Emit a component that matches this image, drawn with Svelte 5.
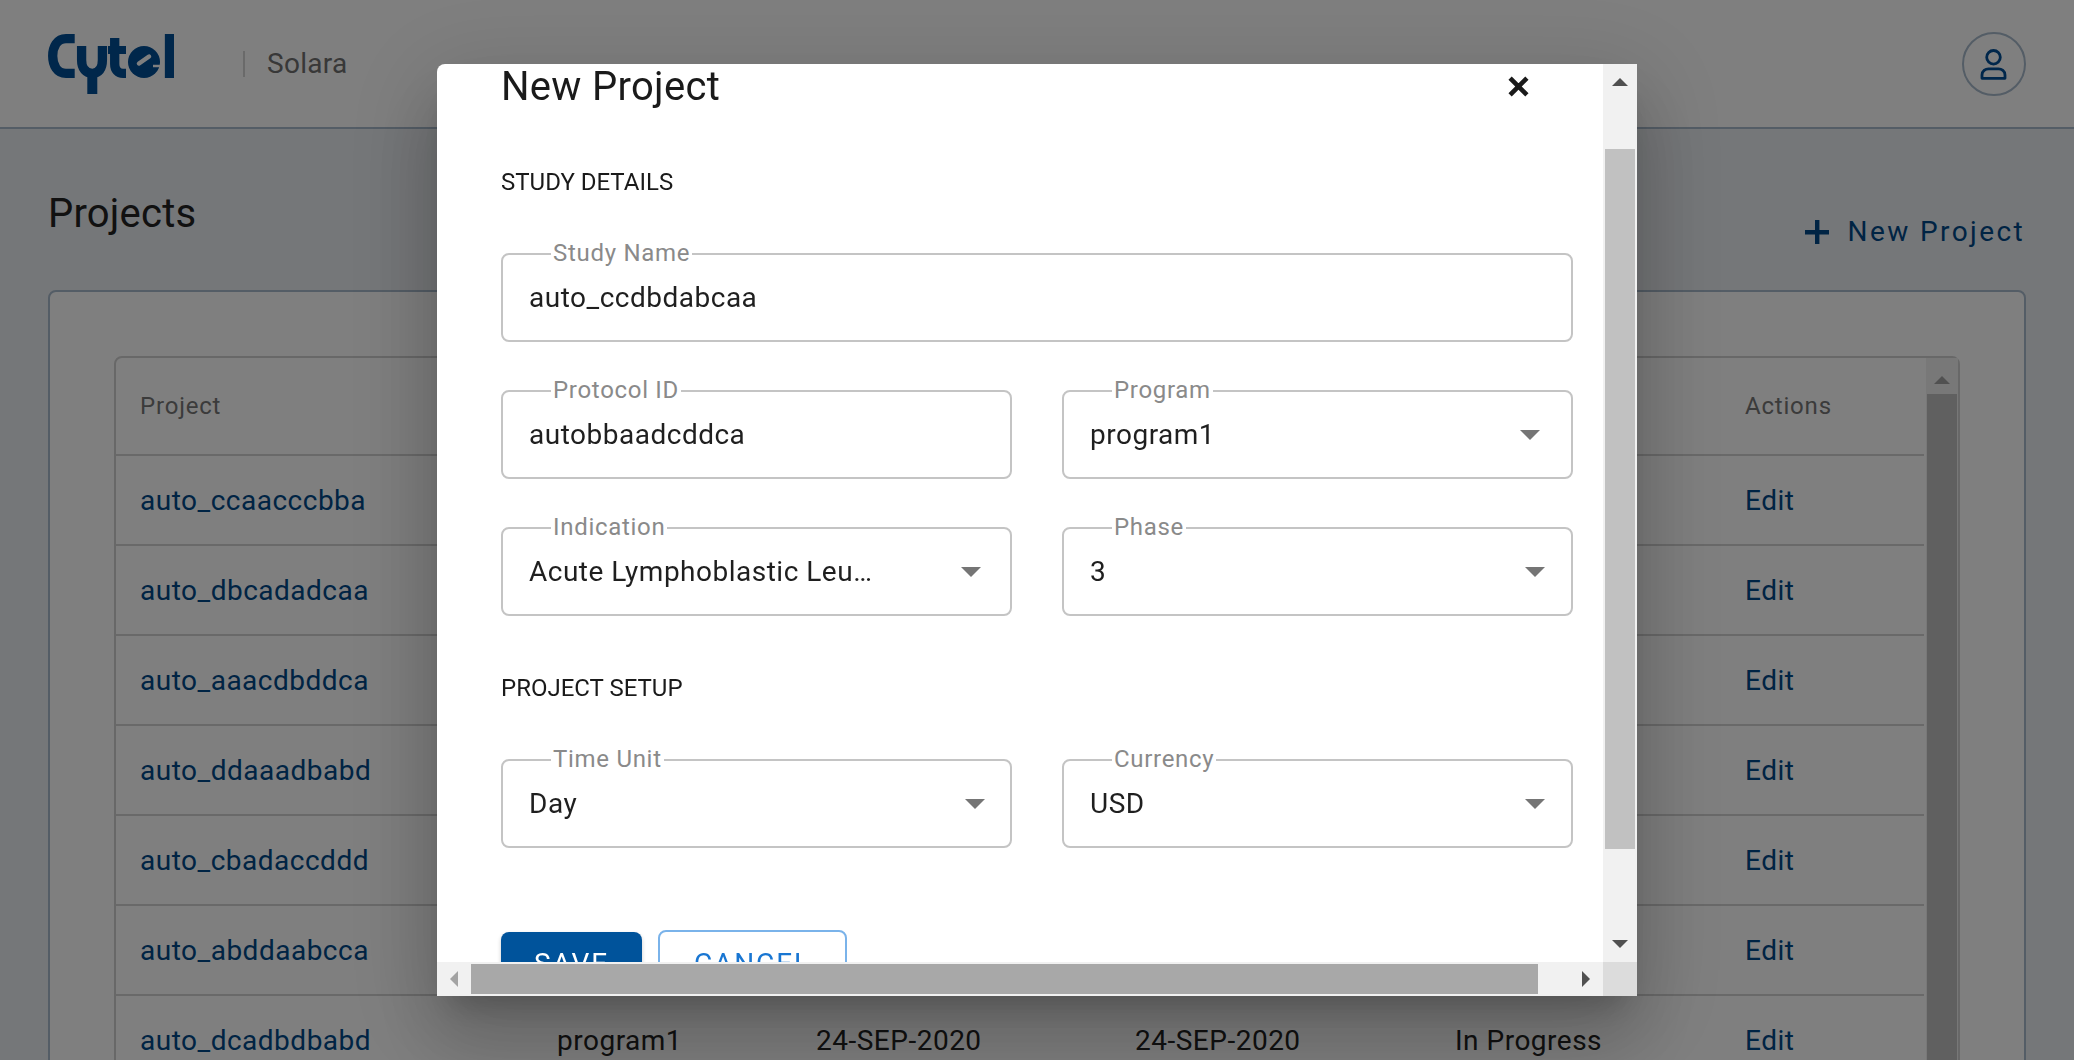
<script>
  const rows = [
    "auto_ccaacccbba",
    "auto_dbcadadcaa",
    "auto_aaacdbddca",
    "auto_ddaaadbabd",
    "auto_cbadaccddd",
    "auto_abddaabcca",
    "auto_dcadbdbabd"
  ];

  const studyRows = [
    [
      { label: "Protocol ID", value: "autobbaadcddca" },
      { label: "Program", value: "program1", arrow: 33 }
    ],
    [
      { label: "Indication", value: "Acute Lymphoblastic Leukemia", arrow: 31 },
      { label: "Phase", value: "3", arrow: 28 }
    ]
  ];

  const setupRow = [
    { label: "Time Unit", value: "Day", arrow: 27 },
    { label: "Currency", value: "USD", arrow: 28 }
  ];
</script>

{#snippet field(f)}
  <div class="field">
    <span class="legend">{f.label}</span>
    <span class="value">{f.value}</span>
    {#if f.arrow}
      <i class="caret" style="margin-right: {f.arrow - 2}px"></i>
    {/if}
  </div>
{/snippet}

<header class="topbar">
  <svg class="logo" viewBox="48 34 126 60" width="126" height="60" aria-label="Cytel">
    <g fill="none" stroke="#004e96" stroke-width="9.3">
      <path d="M74.700 38.700H66C57 38.700 52.700 47 52.700 56S57 73.300 66 73.300H74.700" />
      <path d="M81.600 46V60C81.600 69 86 73.300 92.300 73.300S102.400 69 102.400 60V46" />
      <path d="M92.300 70V94" stroke-width="10" />
      <path d="M114.700 38V64C114.700 70 118 73.400 123 73.400H126" />
      <path d="M108 50H126" stroke-width="8" />
      <path d="M169.500 34V78" />
    </g>
    <circle cx="144" cy="62" r="16" fill="#004e96" />
    <path d="M139 63.500L149 56.500" stroke="#fff" stroke-width="4.500" stroke-linecap="round" />
    <path d="M153 66H161" stroke="#fff" stroke-width="2.500" />
  </svg>
  <span class="divider"></span>
  <span class="product">Solara</span>
  <button class="avatar" aria-label="Account">
    <svg width="32" height="32" viewBox="0 0 32 32" fill="none" stroke="#004e96" stroke-width="2.8">
      <circle cx="15.500" cy="9.300" r="6.800" />
      <path d="M4 30.300V27C4 23 7.500 20.800 10.500 20.800H20.500C23.500 20.800 27 23 27 27V30.300Z" stroke-linejoin="round" />
    </svg>
  </button>
</header>

<main class="page">
  <div class="page-head">
    <h1>Projects</h1>
    <button class="new-project">
      <svg width="24" height="24" viewBox="0 0 24 24" fill="#004888"><path d="M10 0h4.400v10H24v4.400h-9.600V24H10v-9.600H0V10h10z" /></svg>
      New Project
    </button>
  </div>

  <section class="card">
    <div class="table-wrap">
      <table>
        <thead>
          <tr>
            <th class="c1">Project</th>
            <th class="c2">Program</th>
            <th class="c3">Start Date</th>
            <th class="c4">End Date</th>
            <th class="c5">Status</th>
            <th class="c6">Actions</th>
          </tr>
        </thead>
        <tbody>
          {#each rows as name}
            <tr>
              <td><a href="#top">{name}</a></td>
              <td>program1</td>
              <td>24-SEP-2020</td>
              <td>24-SEP-2020</td>
              <td>In Progress</td>
              <td><a href="#top">Edit</a></td>
            </tr>
          {/each}
        </tbody>
      </table>
      <div class="table-scroll">
        <i class="arrow up"></i>
        <div class="table-thumb"></div>
      </div>
    </div>
  </section>
</main>

<div class="backdrop">
  <div class="dialog" role="dialog" aria-modal="true">
    <div class="viewport">
      <div class="dialog-title">
        <h2>New Project</h2>
        <svg class="close" width="21" height="21" viewBox="0 0 20 20" stroke="#1a1a1a" stroke-width="4.4"><path d="M2 2l16 16M18 2L2 18" /></svg>
      </div>

      <h3>STUDY DETAILS</h3>
      <div class="row full">
        {@render field({ label: "Study Name", value: "auto_ccdbdabcaa" })}
      </div>
      {#each studyRows as row}
        <div class="row">
          {#each row as f}
            {@render field(f)}
          {/each}
        </div>
      {/each}

      <h3>PROJECT SETUP</h3>
      <div class="row">
        {#each setupRow as f}
          {@render field(f)}
        {/each}
      </div>

      <div class="actions">
        <button class="save">SAVE</button>
        <button class="cancel">CANCEL</button>
      </div>
    </div>

    <div class="vscroll">
      <i class="arrow up dark"></i>
      <div class="vthumb"></div>
      <i class="arrow down dark"></i>
    </div>
    <div class="hscroll">
      <i class="arrow left"></i>
      <div class="hthumb"></div>
      <i class="arrow right"></i>
    </div>
    <div class="corner"></div>
  </div>
</div>

<style>
  :global(html),
  :global(body) {
    height: 100%;
    overflow: hidden;
  }

  :global(body) {
    background: #ebeef2;
    font-family: Roboto, "Liberation Sans", sans-serif;
    color: #222;
  }

  button {
    font-family: inherit;
    cursor: pointer;
  }

  .topbar {
    display: flex;
    align-items: center;
    height: 127px;
    padding: 0 48px;
    background: #fff;
    border-bottom: 2px solid #a8bacc;
  }

  .divider {
    width: 2px;
    height: 26px;
    margin: 0 22px 0 69px;
    background: #d4d4d4;
  }

  .product {
    font-size: 28px;
    line-height: 32px;
    letter-spacing: 0.3px;
    color: #707070;
  }

  .avatar {
    display: flex;
    align-items: center;
    justify-content: center;
    width: 64px;
    height: 64px;
    margin-left: auto;
    padding: 0;
    background: none;
    border: 2px solid #a8bacc;
    border-radius: 50%;
  }

  .page {
    box-sizing: border-box;
    height: 931px;
    overflow: hidden;
    padding: 62px 48px 0;
  }

  .page-head {
    display: flex;
    justify-content: space-between;
    align-items: flex-start;
    height: 58px;
  }

  h1 {
    margin: 0;
    font-size: 40px;
    font-weight: 400;
    line-height: 46px;
    letter-spacing: 0.2px;
    color: #222;
  }

  .new-project {
    display: flex;
    align-items: center;
    gap: 19px;
    margin-top: 25px;
    padding: 0 1px 0 0;
    background: none;
    border: 0;
    font-size: 28px;
    line-height: 32px;
    letter-spacing: 2.4px;
    color: #004888;
  }

  .card {
    margin-top: 41px;
    padding: 64px;
    background: #fff;
    border: 2px solid #a8bacc;
    border-radius: 8px;
  }

  .table-wrap {
    display: flex;
    border: 2px solid #d0d0d0;
    border-radius: 8px 8px 0 0;
  }

  table {
    width: 1808px;
    table-layout: fixed;
    border-collapse: separate;
    border-spacing: 0;
    flex: none;
  }

  th,
  td {
    box-sizing: border-box;
    height: 90px;
    padding: 0 0 0 25px;
    border-bottom: 2px solid #d3d3d3;
    text-align: left;
    font-size: 28px;
    font-weight: 400;
    letter-spacing: 0.5px;
  }

  th:first-child,
  td:first-child {
    padding-left: 24px;
  }

  th {
    height: 98px;
    font-size: 24px;
    letter-spacing: 0.8px;
    color: #777;
  }

  .c1 { width: 416px; }
  .c2 { width: 259px; }
  .c3 { width: 319px; }
  .c4 { width: 320px; }
  .c5 { width: 290px; }
  .c6 { width: 204px; }

  a {
    color: #004888;
    text-decoration: none;
  }

  .table-scroll {
    display: flex;
    flex-direction: column;
    align-items: center;
    flex: 1;
    margin-left: 2px;
    background: #f1f1f1;
  }

  .table-thumb {
    flex: 1;
    width: 30px;
    margin-top: 10px;
    background: #c1c1c1;
  }

  .arrow {
    display: block;
    width: 0;
    height: 0;
    flex: none;
    border-style: solid;
    border-color: transparent;
  }

  .arrow.up {
    margin-top: 18px;
    border-width: 0 8px 8px;
    border-bottom-color: #a3a3a3;
  }

  .arrow.down {
    margin-top: auto;
    margin-bottom: 14px;
    border-width: 8px 8px 0;
    border-top-color: #505050;
  }

  .arrow.up.dark {
    margin-top: 14px;
    border-bottom-color: #505050;
  }

  .arrow.left {
    margin: 0 13px;
    border-width: 8px 8px 8px 0;
    border-right-color: #a3a3a3;
  }

  .arrow.right {
    margin: 0 13px 0 auto;
    border-width: 8px 0 8px 8px;
    border-left-color: #505050;
  }

  .backdrop {
    position: fixed;
    inset: 0;
    display: flex;
    align-items: center;
    justify-content: center;
    background: rgba(0, 0, 0, 0.5);
  }

  .dialog {
    display: grid;
    grid-template-columns: 1166px 34px;
    grid-template-rows: 898px 34px;
    width: 1200px;
    height: 932px;
    background: #fff;
    border-radius: 8px 0 0 0;
    box-shadow:
      0 22px 30px -14px rgba(0, 0, 0, 0.2),
      0 48px 76px 6px rgba(0, 0, 0, 0.14),
      0 18px 92px 16px rgba(0, 0, 0, 0.12);
  }

  .viewport {
    overflow: hidden;
    padding: 0 29px 0 64px;
  }

  .dialog-title {
    display: flex;
    align-items: flex-start;
    justify-content: space-between;
  }

  h2 {
    margin: 0;
    font-size: 40px;
    font-weight: 400;
    line-height: 46px;
    letter-spacing: 0.3px;
    color: #1a1a1a;
  }

  .close {
    margin: 12px 45px 0 0;
  }

  h3 {
    margin: 58px 0 57px;
    font-size: 24px;
    font-weight: 400;
    line-height: 28px;
    color: #1a1a1a;
  }

  .row {
    display: grid;
    grid-template-columns: 511px 511px;
    column-gap: 50px;
    margin-bottom: 48px;
  }

  .row.full {
    grid-template-columns: 1072px;
  }

  .field {
    position: relative;
    display: flex;
    align-items: center;
    box-sizing: border-box;
    height: 89px;
    padding: 0 0 0 26px;
    border: 2px solid #c4c4c4;
    border-radius: 8px;
  }

  .legend {
    position: absolute;
    top: -16px;
    left: 48px;
    padding: 0 2px;
    background: #fff;
    font-size: 24px;
    line-height: 28px;
    letter-spacing: 0.7px;
    color: #8a8a8a;
  }

  .value {
    overflow: hidden;
    flex: 1;
    min-width: 0;
    margin-right: 89px;
    font-size: 28px;
    letter-spacing: 0.5px;
    white-space: nowrap;
    text-overflow: ellipsis;
    color: #1f1f1f;
  }

  .caret {
    width: 0;
    height: 0;
    flex: none;
    border-style: solid;
    border-color: transparent;
    border-width: 10px 10px 0;
    border-top-color: #757575;
  }

  .actions {
    display: flex;
    align-items: center;
    gap: 16px;
    margin-top: 82px;
  }

  .actions button {
    height: 62px;
    font-size: 28px;
    letter-spacing: 1.9px;
    border-radius: 8px;
  }

  .save {
    width: 141px;
    color: #fff;
    background: #00539b;
    border: 0;
    box-shadow: 0 2px 4px rgba(0, 0, 0, 0.2);
  }

  .actions .cancel {
    width: 189px;
    height: 66px;
    color: #1976d2;
    background: #fff;
    border: 2px solid #7ab3ea;
  }

  .vscroll {
    display: flex;
    flex-direction: column;
    align-items: center;
    background: #f1f1f1;
  }

  .vthumb {
    width: 30px;
    height: 700px;
    margin-top: 63px;
    background: #c1c1c1;
  }

  .hscroll {
    display: flex;
    align-items: center;
    background: #f1f1f1;
  }

  .hthumb {
    width: 1067px;
    height: 30px;
    background: #a8a8a8;
  }

  .corner {
    background: #dcdcdc;
  }
</style>
